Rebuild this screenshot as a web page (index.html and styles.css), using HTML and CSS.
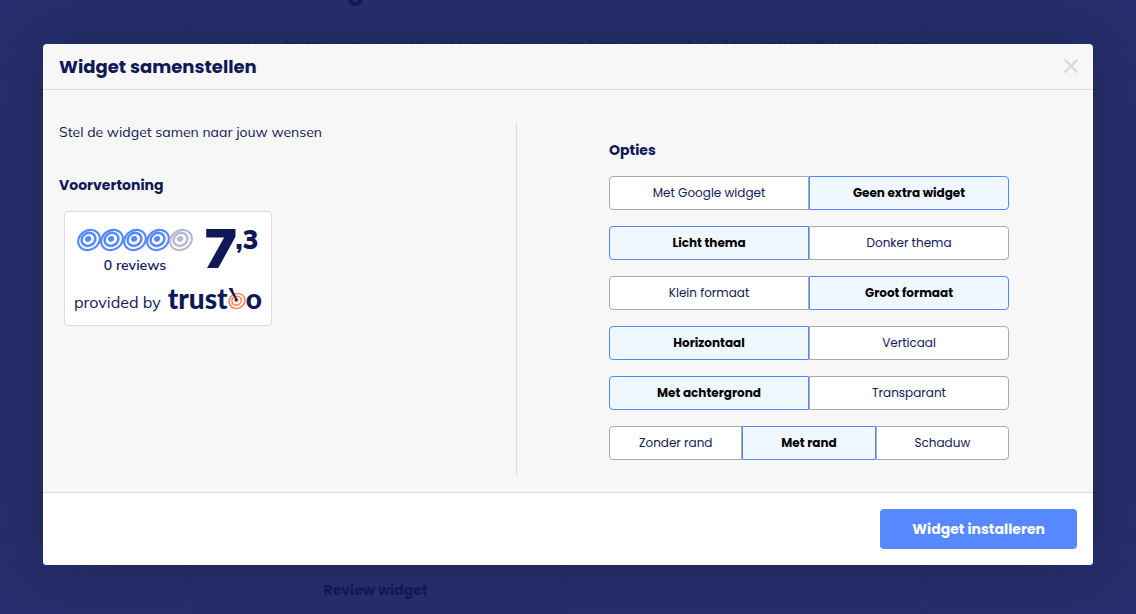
FILE: index.html
```html
<!DOCTYPE html>
<html lang="nl">
<head>
<meta charset="utf-8">
<meta name="viewport" content="width=device-width, initial-scale=1">
<title>Widget samenstellen</title>
<link rel="stylesheet" href="styles.css">
</head>
<body>
<svg class="symbols" aria-hidden="true">
  <symbol id="target" viewBox="0 0 24 22">
    <g fill="none" stroke="currentColor" transform="rotate(-32 12 11)">
      <ellipse cx="12" cy="11" rx="11.300" ry="9.600" stroke-width="2.200"/>
      <ellipse cx="11.900" cy="10.200" rx="7.200" ry="6.200" stroke-width="2.500"/>
      <ellipse cx="11.800" cy="9.600" rx="3.200" ry="2.800" fill="currentColor" stroke="none"/>
    </g>
  </symbol>
</svg>
<main class="page">
  <h1 class="page-title">Widgets</h1>
  <section class="page-card">
    <p>Voeg een widget toe aan je website om het vertrouwen van bezoekers in je bedrijf te vergroten. Kies een template</p>
    <div class="template"><h2>Review widget</h2></div>
  </section>
</main>
<div class="overlay">
  <div class="modal" role="dialog" aria-modal="true" aria-labelledby="modal-title">
    <header class="modal-header">
      <h2 id="modal-title" class="modal-title">Widget samenstellen</h2>
      <button class="close" type="button" aria-label="Sluiten">
        <svg width="16" height="16" viewBox="0 0 16 16"><path d="M1.500 1.500l13 13M14.500 1.500l-13 13" fill="none" stroke="currentColor" stroke-width="2"/></svg>
      </button>
    </header>
    <div class="modal-body">
      <section class="preview">
        <p class="intro">Stel de widget samen naar jouw wensen</p>
        <h3 class="subtitle">Voorvertoning</h3>
        <div class="widget">
          <div class="rating">
            <div class="stars">
              <div class="targets">
                <svg><use href="#target"/></svg><svg><use href="#target"/></svg><svg><use href="#target"/></svg><svg><use href="#target"/></svg><svg class="empty"><use href="#target"/></svg>
              </div>
              <span class="reviews">0 reviews</span>
            </div>
            <div class="score"><span class="whole">7</span><span class="decimal">,3</span></div>
          </div>
          <div class="provider">
            <span class="by">provided by</span>
            <span class="logo"><span>trust</span><svg width="18" height="24" viewBox="0 0 18 24">
              <g fill="none" stroke="#ff8764" transform="rotate(-28 9 15)">
                <ellipse cx="9" cy="15" rx="8" ry="7.300" stroke-width="1.700"/>
                <ellipse cx="8.800" cy="14.600" rx="4.800" ry="4.300" stroke-width="1.700"/>
                <ellipse cx="8.600" cy="14.300" rx="2" ry="1.800" fill="#ff8764" stroke="none"/>
              </g>
              <path d="M.5 2 4.500 2 5.500 5.500 8.800 12 7.300 13 2.800 6z" fill="#101858"/>
              <circle cx="8.300" cy="13.500" r="1.600" fill="#101858"/>
            </svg><span>o</span></span>
          </div>
        </div>
      </section>
      <section class="options">
        <div class="options-list">
          <h3 class="subtitle">Opties</h3>
          <div class="segments" role="group" aria-label="Extra widget"><button type="button" aria-pressed="false">Met Google widget</button><button type="button" aria-pressed="true">Geen extra widget</button></div>
          <div class="segments" role="group" aria-label="Thema"><button type="button" aria-pressed="true">Licht thema</button><button type="button" aria-pressed="false">Donker thema</button></div>
          <div class="segments" role="group" aria-label="Formaat"><button type="button" aria-pressed="false">Klein formaat</button><button type="button" aria-pressed="true">Groot formaat</button></div>
          <div class="segments" role="group" aria-label="Richting"><button type="button" aria-pressed="true">Horizontaal</button><button type="button" aria-pressed="false">Verticaal</button></div>
          <div class="segments" role="group" aria-label="Achtergrond"><button type="button" aria-pressed="true">Met achtergrond</button><button type="button" aria-pressed="false">Transparant</button></div>
          <div class="segments" role="group" aria-label="Rand"><button type="button" aria-pressed="false">Zonder rand</button><button type="button" aria-pressed="true">Met rand</button><button type="button" aria-pressed="false">Schaduw</button></div>
        </div>
      </section>
    </div>
    <footer class="modal-footer"><button class="install" type="button">Widget installeren</button></footer>
  </div>
</div>
</body>
</html>
```
FILE: styles.css
```css
:root {
  --navy: #101858;
  --blue: #5688ff;
  --line: #dcdce0;
  --heading: Poppins, Inter, sans-serif;
  --text: Muli, Mulish, "Open Sans", sans-serif;
}

* { box-sizing: border-box; }
h1, h2, h3, p { margin: 0; }

body {
  margin: 0;
  min-height: 100vh;
  overflow: hidden;
  background: #272e6e;
  color: var(--navy);
  font-family: var(--text);
}

button { font-family: var(--heading); cursor: pointer; }
.symbols { position: absolute; width: 0; height: 0; }

/* Page behind the dialog */
.page {
  height: 100vh;
  overflow: hidden;
  padding: 0 188px;
}
.page-title {
  height: 22px;
  display: flex;
  align-items: flex-end;
  padding: 0 0 12px 111px;
  font: 700 24px/38px var(--heading);
}
.page-card {
  width: 100%;
  max-width: 736px;
  border: 1px solid #252b66;
  border-radius: 4px;
  color: #161c5a;
}
.page-card p {
  padding: 10px 12px 0;
  font-size: 14px;
  line-height: 24px;
  white-space: nowrap;
}
.template {
  display: flex;
  flex-direction: column;
  justify-content: flex-end;
  align-items: center;
  width: 374px;
  height: 555px;
  padding-bottom: 9px;
  border-right: 1px solid #252b66;
  border-bottom: 1px solid #252b66;
  border-radius: 4px;
}
.template h2 {
  color: var(--navy);
  font: 700 14px/24px var(--heading);
}

/* Dialog */
.overlay {
  position: absolute;
  inset: 0;
  padding: 44px 43px;
}
.modal {
  overflow: hidden;
  border-radius: 4px;
  background: #f7f7f7;
  box-shadow: 0 0 60px rgba(22, 34, 60, 0.6);
}
.modal-header {
  display: flex;
  align-items: flex-start;
  justify-content: space-between;
  padding: 8px 14px 7px 16px;
  border-bottom: 1px solid var(--line);
}
.modal-title { font: 700 18px/30px var(--heading); }
.close {
  display: flex;
  padding: 6px 0;
  border: 0;
  background: none;
  color: #d8d8da;
}
.modal-body {
  display: grid;
  grid-template-columns: 45% 55%;
  padding: 32px 16px 16px;
}
.preview { border-right: 1px solid var(--line); }
.intro { font-size: 14px; line-height: 20px; font-feature-settings: "ss01"; }
.subtitle { font: 700 14px/24px var(--heading); }
.preview .subtitle { margin: 31px 0 14px; }

.widget {
  display: flex;
  flex-direction: column;
  gap: 13px;
  width: 208px;
  height: 115px;
  margin-left: 5px;
  padding: 13px 8px 8px 9px;
  border: 1px solid var(--line);
  border-radius: 4px;
  background: #fff;
}
.rating { display: flex; gap: 11px; height: 48px; }
.stars {
  display: flex;
  flex-direction: column;
  align-items: center;
  padding: 3px 0 0 3px;
}
.targets { display: flex; color: var(--blue); }
.targets svg { width: 24px; height: 24px; margin-right: -1px; }
.targets .empty { margin-right: 0; color: #b7bacf; }
.reviews { font-size: 14px; font-weight: 600; line-height: 26px; }
.score { display: flex; align-items: flex-start; font-weight: 900; }
.whole { font-size: 56px; line-height: 44px; }
.decimal { font-size: 26px; line-height: 30px; margin-left: -2px; }
.provider { display: flex; align-items: center; gap: 7px; height: 28px; }
.by { padding-top: 4px; font-size: 16px; line-height: 28px; white-space: nowrap; }
.logo {
  display: flex;
  align-items: center;
  padding-bottom: 4px;
  font: 900 28px/24px Lato, sans-serif;
}

.options { padding-left: 24px; }
.options-list {
  display: flex;
  flex-direction: column;
  gap: 16px;
  max-width: 400px;
  margin: 0 auto;
  padding: 16px 0;
}
.options .subtitle { margin-bottom: -2px; }
.segments { display: flex; }
.segments button {
  flex: 1 1 0;
  height: 34px;
  padding: 0;
  border: 1px solid #a9a9ae;
  background: #fff;
  color: var(--navy);
  font-size: 12px;
}
.segments button:first-child { border-radius: 4px 0 0 4px; }
.segments button:last-child { border-radius: 0 4px 4px 0; }
.segments button[aria-pressed="true"] {
  border-color: var(--blue);
  background: #eff7ff;
  color: #000;
  font-weight: 700;
}

.modal-footer {
  display: flex;
  justify-content: flex-end;
  padding: 16px;
  border-top: 1px solid var(--line);
  background: #fff;
}
.install {
  height: 40px;
  padding: 0 32px;
  border: 0;
  border-radius: 4px;
  background: var(--blue);
  color: #fff;
  font-size: 14px;
  font-weight: 700;
}
```
